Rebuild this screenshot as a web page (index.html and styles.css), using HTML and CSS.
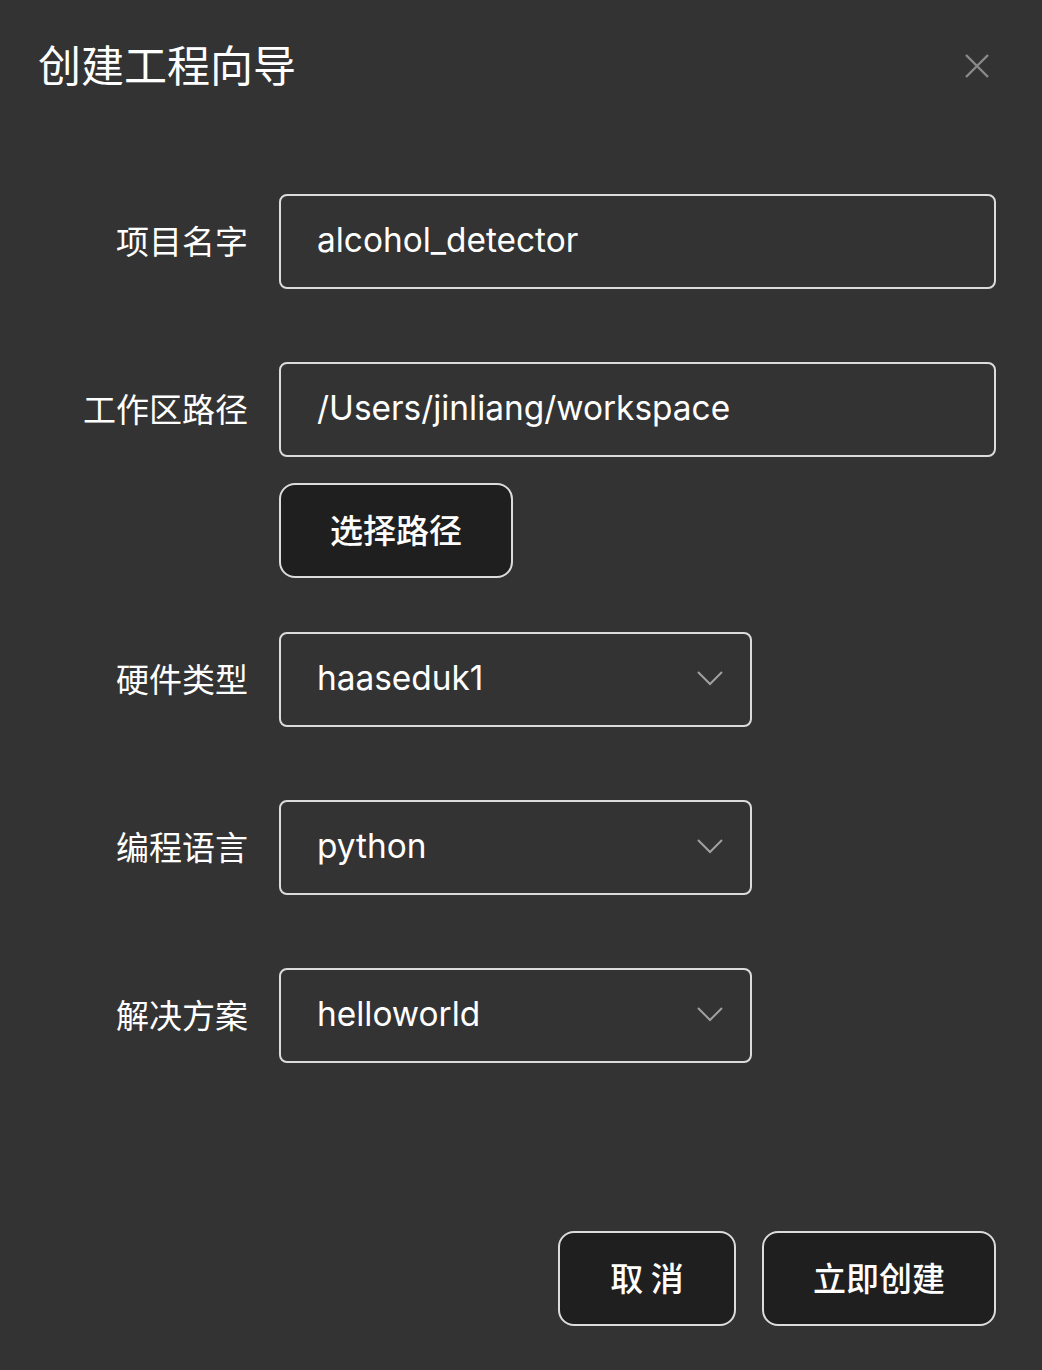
FILE: index.html
```html
<!DOCTYPE html>
<html lang="zh">
<head>
<meta charset="utf-8">
<title>创建工程向导</title>
<link rel="stylesheet" href="styles.css">
</head>
<body>
<div class="dialog">
  <header class="dialog-header">
    <h1 class="dialog-title">创建工程向导</h1>
    <button class="close-btn" aria-label="关闭">
      <svg width="26" height="26" viewBox="0 0 26 26"><path d="M2 2 L24 24 M24 2 L2 24" stroke="#8a8a8a" stroke-width="2.4" fill="none"/></svg>
    </button>
  </header>

  <form class="form">
    <div class="row">
      <label class="label">项目名字</label>
      <div class="field"><div class="input">alcohol_detector</div></div>
    </div>
    <div class="row row-path">
      <label class="label">工作区路径</label>
      <div class="field">
        <div class="input">/Users/jinliang/workspace</div>
        <button type="button" class="btn btn-path">选择路径</button>
      </div>
    </div>
    <div class="row row-select">
      <label class="label">硬件类型</label>
      <div class="field"><div class="select"><span>haaseduk1</span><svg class="chev" width="28" height="16" viewBox="0 0 28 16"><path d="M2 2 L14 14 L26 2" stroke="#a0a0a0" stroke-width="2" fill="none"/></svg></div></div>
    </div>
    <div class="row">
      <label class="label">编程语言</label>
      <div class="field"><div class="select"><span>python</span><svg class="chev" width="28" height="16" viewBox="0 0 28 16"><path d="M2 2 L14 14 L26 2" stroke="#a0a0a0" stroke-width="2" fill="none"/></svg></div></div>
    </div>
    <div class="row">
      <label class="label">解决方案</label>
      <div class="field"><div class="select"><span>helloworld</span><svg class="chev" width="28" height="16" viewBox="0 0 28 16"><path d="M2 2 L14 14 L26 2" stroke="#a0a0a0" stroke-width="2" fill="none"/></svg></div></div>
    </div>
  </form>

  <footer class="footer">
    <button type="button" class="btn btn-cancel">取 消</button>
    <button type="button" class="btn btn-create">立即创建</button>
  </footer>
</div>
</body>
</html>
```

FILE: styles.css
```css
html, body {
  margin: 0;
  padding: 0;
  background: #333333;
}
body {
  width: 1042px;
  height: 1370px;
  font-family: "Inter", "Noto Sans CJK SC", sans-serif;
  color: #ffffff;
}
.dialog {
  width: 1042px;
  height: 1370px;
  box-sizing: border-box;
  display: flex;
  flex-direction: column;
}
.dialog-header {
  display: flex;
  align-items: center;
  justify-content: space-between;
  padding: 33px 52px 0 38px;
  height: 60px;
}
.dialog-title {
  margin: 0;
  font-family: "Noto Sans CJK SC", sans-serif;
  font-weight: 400;
  font-size: 43px;
  line-height: 60px;
  color: #ffffff;
}
.close-btn {
  background: none;
  border: none;
  padding: 0;
  margin-top: 6px;
  display: flex;
}
.form {
  display: flex;
  flex-direction: column;
  gap: 73px;
  margin-top: 101px;
  padding-right: 46px;
}
.row {
  display: grid;
  grid-template-columns: 248px 1fr;
  column-gap: 31px;
  align-items: start;
}
.row-path + .row-select {
  margin-top: -19px;
}
.label {
  text-align: right;
  font-family: "Noto Sans CJK SC", sans-serif;
  font-size: 33px;
  line-height: 93px;
  color: #ffffff;
}
.field {
  display: flex;
  flex-direction: column;
  align-items: flex-start;
  gap: 26px;
}
.input, .select {
  box-sizing: border-box;
  height: 95px;
  border: 2px solid #dcdcdc;
  border-radius: 8px;
  padding: 0 36px 3px;
  display: flex;
  align-items: center;
  font-size: 33.4px;
  color: #ffffff;
  background: #333333;
}
.input {
  width: 717px;
}
.select {
  width: 473px;
  justify-content: space-between;
  padding-right: 26px;
}
.chev {
  display: block;
}
.btn {
  box-sizing: border-box;
  height: 95px;
  background: #1f1f1f;
  border: 2px solid #dcdcdc;
  border-radius: 16px;
  color: #ffffff;
  font-family: "Noto Sans CJK SC", sans-serif;
  font-size: 33px;
  font-weight: 500;
  padding: 0 0 4px;
}
.btn-path {
  width: 234px;
}
.footer {
  display: flex;
  justify-content: flex-end;
  gap: 26px;
  padding-right: 46px;
  margin-top: auto;
  margin-bottom: 44px;
}
.btn-cancel {
  width: 178px;
}
.btn-create {
  width: 234px;
}
```
